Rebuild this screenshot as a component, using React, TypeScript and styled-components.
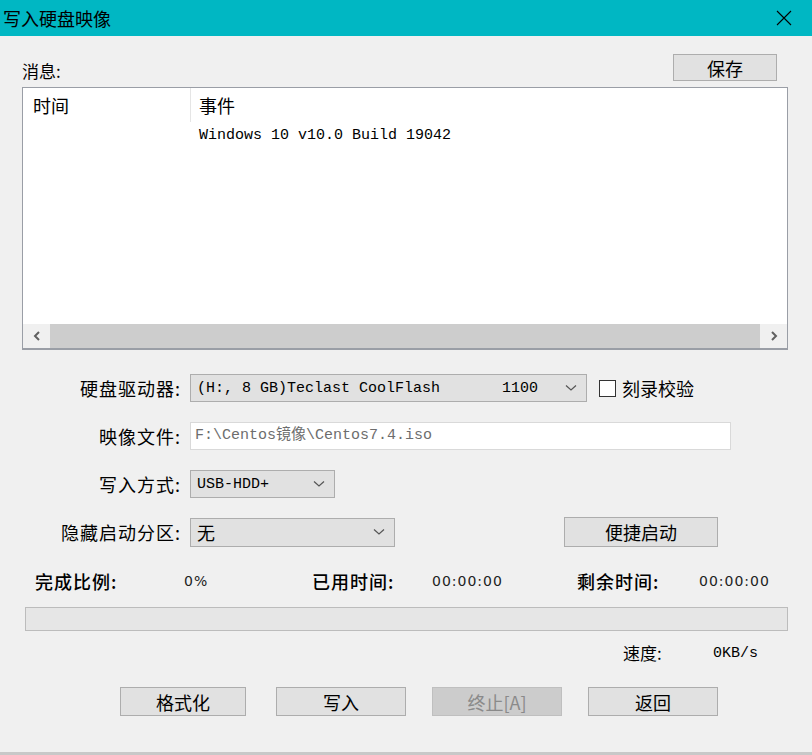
import styled, { createGlobalStyle } from 'styled-components';

const Global = createGlobalStyle`
  html, body {
    margin: 0;
    padding: 0;
    background: #f0f0f0;
  }
  body {
    font-family: 'Noto Sans CJK SC', 'Noto Sans', sans-serif;
    color: #000;
  }
`;

const MONO = `'Liberation Mono', 'Noto Sans CJK SC', monospace`;

const Chevron = () => (
  <svg width="12" height="8" viewBox="0 0 12 8">
    <polyline points="1,1.5 6,6 11,1.5" fill="none" stroke="#555" strokeWidth="1.2" />
  </svg>
);

const Combo = ({ width, children }: { width: number; children: React.ReactNode }) => (
  <S.Combo $width={width}>
    <S.ComboText>{children}</S.ComboText>
    <Chevron />
  </S.Combo>
);

const App = () => {
  return (
    <>
      <Global />
      <S.Window>
        <S.TitleBar>
          <S.Title>写入硬盘映像</S.Title>
          <svg width="16" height="16" viewBox="0 0 16 16">
            <path d="M1 1 L15 15 M15 1 L1 15" stroke="#000" strokeWidth="1.1" />
          </svg>
        </S.TitleBar>

        <S.Body>
          <S.MsgHeader>
            <S.Label>消息:</S.Label>
            <S.Button $width={104} $height={27} style={{ marginRight: 11 }}>
              保存
            </S.Button>
          </S.MsgHeader>

          <S.ListBox>
            <S.ListContent>
              <S.ListHead>
                <S.HeadCell $width={167}>时间</S.HeadCell>
                <S.HeadCell $divider>事件</S.HeadCell>
              </S.ListHead>
              <S.ListRow>Windows 10 v10.0 Build 19042</S.ListRow>
            </S.ListContent>
            <S.HScroll>
              <S.ScrollArrow>
                <svg width="8" height="10" viewBox="0 0 8 10">
                  <polyline points="6,1 2,5 6,9" fill="none" stroke="#606060" strokeWidth="2" />
                </svg>
              </S.ScrollArrow>
              <S.Thumb />
              <S.ScrollArrow>
                <svg width="8" height="10" viewBox="0 0 8 10">
                  <polyline points="2,1 6,5 2,9" fill="none" stroke="#606060" strokeWidth="2" />
                </svg>
              </S.ScrollArrow>
            </S.HScroll>
          </S.ListBox>

          <S.Form>
            <S.FormLabel>硬盘驱动器:</S.FormLabel>
            <S.FormControls>
              <Combo width={397}>
                <span>(H:, 8 GB)Teclast CoolFlash</span>
                <S.ComboExtra>1100</S.ComboExtra>
              </Combo>
              <S.Check />
              <S.CheckLabel>刻录校验</S.CheckLabel>
            </S.FormControls>

            <S.FormLabel>映像文件:</S.FormLabel>
            <S.FormControls>
              <S.PathInput>F:\Centos镜像\Centos7.4.iso</S.PathInput>
            </S.FormControls>

            <S.FormLabel>写入方式:</S.FormLabel>
            <S.FormControls>
              <Combo width={145}>USB-HDD+</Combo>
            </S.FormControls>

            <S.FormLabel>隐藏启动分区:</S.FormLabel>
            <S.FormControls>
              <S.Combo $width={205} $cjk>
                <S.ComboText $cjk>无</S.ComboText>
                <Chevron />
              </S.Combo>
              <S.Button $width={154} $height={30} style={{ marginLeft: 169 }}>
                便捷启动
              </S.Button>
            </S.FormControls>
          </S.Form>

          <S.Stats>
            <S.StatLabel>完成比例:</S.StatLabel>
            <S.StatValue>0%</S.StatValue>
            <S.StatLabel>已用时间:</S.StatLabel>
            <S.StatValue>00:00:00</S.StatValue>
            <S.StatLabel>剩余时间:</S.StatLabel>
            <S.StatValue>00:00:00</S.StatValue>
          </S.Stats>

          <S.Progress />

          <S.SpeedRow>
            <S.Label>速度:</S.Label>
            <S.MonoValue>0KB/s</S.MonoValue>
          </S.SpeedRow>

          <S.Actions>
            <S.Button $width={126} $height={29}>格式化</S.Button>
            <S.Button $width={130} $height={29}>写入</S.Button>
            <S.Button $width={130} $height={29} disabled>
              终止[A]
            </S.Button>
            <S.Button $width={130} $height={29}>返回</S.Button>
          </S.Actions>
        </S.Body>
      </S.Window>
    </>
  );
};

export default App;

const S = {
  Window: styled.div`
    width: 812px;
    height: 755px;
    display: flex;
    flex-direction: column;
    background: #f0f0f0;
    border-bottom: 3px solid #c8c8c8;
    box-sizing: border-box;
    overflow: hidden;
  `,
  TitleBar: styled.div`
    height: 36px;
    flex-shrink: 0;
    background: #00b7c3;
    display: flex;
    align-items: center;
    justify-content: space-between;
    padding: 0 20px 0 3px;
  `,
  Title: styled.div`
    font-size: 18px;
    line-height: 36px;
    color: #000;
  `,
  Body: styled.div`
    flex: 1;
    display: flex;
    flex-direction: column;
    padding: 0 24px 0 22px;
  `,
  MsgHeader: styled.div`
    margin-top: 18px;
    display: flex;
    justify-content: space-between;
    align-items: flex-end;
  `,
  Label: styled.span`
    font-size: 17px;
    line-height: 20px;
    color: #000;
  `,
  Button: styled.button<{ $width: number; $height: number }>`
    width: ${(p) => p.$width}px;
    height: ${(p) => p.$height}px;
    box-sizing: border-box;
    background: #e1e1e1;
    border: 1px solid #adadad;
    border-radius: 0;
    padding: 0;
    font-family: 'Noto Sans CJK SC', sans-serif;
    font-size: 18px;
    color: #000;
    display: flex;
    align-items: center;
    justify-content: center;
    &:disabled {
      background: #cccccc;
      border-color: #bfbfbf;
      color: #8a8a8a;
    }
  `,
  ListBox: styled.div`
    margin-top: 6px;
    width: 766px;
    height: 263px;
    box-sizing: border-box;
    background: #fff;
    border: 1px solid #9a9ea6;
    border-bottom-width: 2px;
    display: flex;
    flex-direction: column;
  `,
  ListContent: styled.div`
    flex: 1;
  `,
  ListHead: styled.div`
    display: flex;
    height: 34px;
    align-items: stretch;
  `,
  HeadCell: styled.div<{ $width?: number; $divider?: boolean }>`
    box-sizing: border-box;
    width: ${(p) => (p.$width ? `${p.$width}px` : 'auto')};
    flex: ${(p) => (p.$width ? 'none' : 1)};
    padding-left: ${(p) => (p.$divider ? 8 : 10)}px;
    border-left: ${(p) => (p.$divider ? '1px solid #e5e5e5' : 'none')};
    font-size: 18px;
    line-height: 34px;
  `,
  ListRow: styled.div`
    margin-top: 3px;
    padding-left: 176px;
    font-family: ${MONO};
    font-size: 15px;
    line-height: 22px;
    color: #000;
  `,
  HScroll: styled.div`
    height: 24px;
    display: flex;
    background: #f0f0f0;
  `,
  ScrollArrow: styled.div`
    width: 27px;
    display: flex;
    align-items: center;
    justify-content: center;
  `,
  Thumb: styled.div`
    flex: 1;
    background: #cdcdcd;
  `,
  Form: styled.div`
    margin-top: 24px;
    display: grid;
    grid-template-columns: 159px 1fr;
    column-gap: 9px;
    row-gap: 20px;
    grid-auto-rows: 28px;
  `,
  FormLabel: styled.div`
    text-align: right;
    font-size: 18px;
    letter-spacing: 1px;
    line-height: 28px;
  `,
  FormControls: styled.div`
    display: flex;
    align-items: center;
  `,
  Combo: styled.div<{ $width: number; $cjk?: boolean }>`
    width: ${(p) => p.$width}px;
    height: ${(p) => (p.$cjk ? 29 : 28)}px;
    box-sizing: border-box;
    background: #e1e1e1;
    border: 1px solid #adadad;
    display: flex;
    align-items: center;
    padding: 0 9px 0 6px;
    gap: 8px;
  `,
  ComboText: styled.div<{ $cjk?: boolean }>`
    flex: 1;
    display: flex;
    font-family: ${(p) => (p.$cjk ? `'Noto Sans CJK SC', sans-serif` : MONO)};
    font-size: ${(p) => (p.$cjk ? 18 : 15)}px;
    white-space: pre;
  `,
  ComboExtra: styled.span`
    margin-left: auto;
    margin-right: 19px;
  `,
  Check: styled.div`
    width: 17px;
    height: 17px;
    box-sizing: border-box;
    margin-left: 12px;
    background: #fff;
    border: 1px solid #333;
  `,
  CheckLabel: styled.span`
    margin-left: 6px;
    font-size: 18px;
  `,
  PathInput: styled.div`
    width: 541px;
    height: 28px;
    box-sizing: border-box;
    background: #fff;
    border: 1px solid #d9d9d9;
    padding-left: 4px;
    font-family: ${MONO};
    font-size: 15px;
    line-height: 26px;
    color: #6d6d6d;
    white-space: pre;
  `,
  Stats: styled.div`
    margin-top: 22px;
    padding-left: 13px;
    display: grid;
    grid-template-columns: 149px 128px 120px 145px 122px auto;
    align-items: center;
    height: 24px;
  `,
  StatLabel: styled.span`
    font-size: 18px;
    font-weight: 500;
    letter-spacing: 1px;
  `,
  StatValue: styled.span`
    font-family: 'DejaVu Sans', sans-serif;
    font-size: 14px;
    letter-spacing: 1px;
    color: #222;
  `,
  Progress: styled.div`
    margin: 15px 0 0 3px;
    width: 763px;
    height: 24px;
    box-sizing: border-box;
    background: #e6e6e6;
    border: 1px solid #bcbcbc;
  `,
  SpeedRow: styled.div`
    margin-top: 10px;
    display: grid;
    grid-template-columns: 90px 60px;
    justify-content: end;
    padding-right: 15px;
    align-items: center;
    height: 24px;
  `,
  MonoValue: styled.span`
    font-family: ${MONO};
    font-size: 15px;
  `,
  Actions: styled.div`
    margin-top: 22px;
    padding-left: 98px;
    display: grid;
    grid-template-columns: repeat(3, 156px) auto;
  `,
};
